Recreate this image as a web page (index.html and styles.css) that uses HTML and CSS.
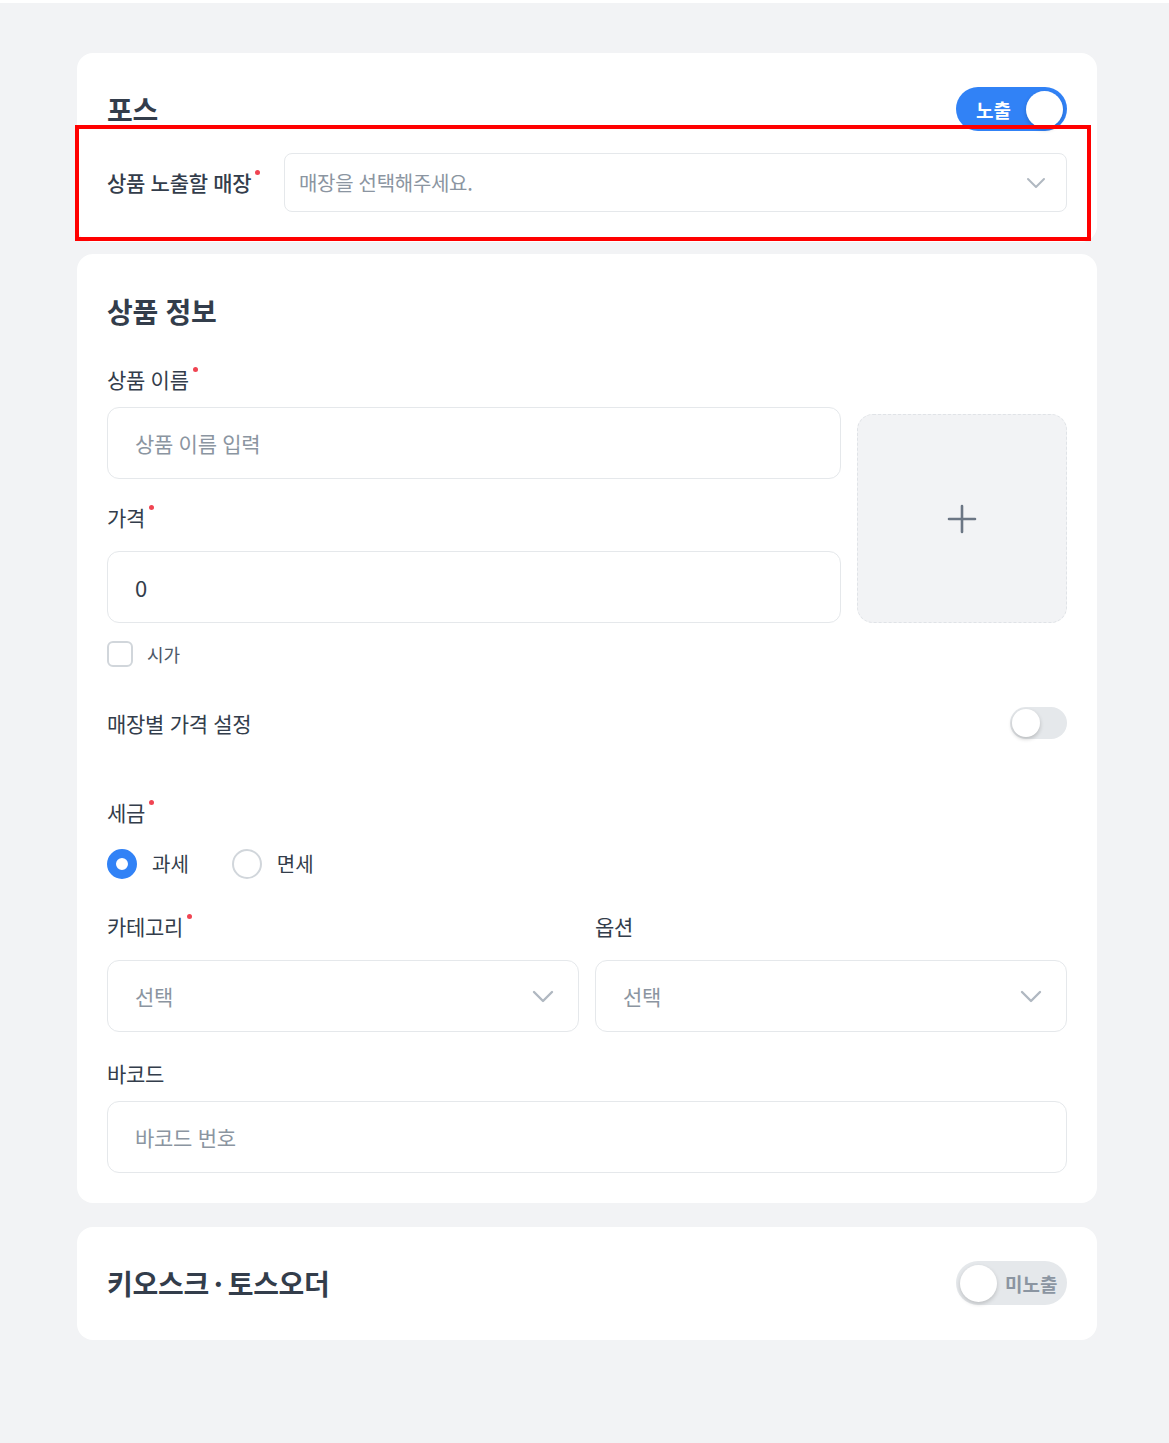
FILE: index.html
```html
<!DOCTYPE html>
<html lang="ko">
<head>
<meta charset="utf-8">
<link rel="stylesheet" href="styles.css">
</head>
<body>
<div class="page">
  <section class="card card-pos">
    <div class="card-head">
      <h2 class="title">포스</h2>
      <div class="pill-toggle on"><span class="pill-text">노출</span><span class="knob"></span></div>
    </div>
    <div class="store-row">
      <label class="label label-store req">상품 노출할 매장</label>
      <div class="select select-sm">
        <span class="placeholder">매장을 선택해주세요.</span>
        <svg class="chev" width="20" height="12" viewBox="0 0 20 12"><path d="M2 2l8 8 8-8" fill="none" stroke="#b0b8c1" stroke-width="2" stroke-linecap="round" stroke-linejoin="round"/></svg>
      </div>
    </div>
    <div class="highlight"></div>
  </section>

  <section class="card card-info">
    <h2 class="title">상품 정보</h2>
    <div class="top-grid">
      <div class="fields">
        <div class="field field-name">
          <label class="label req">상품 이름</label>
          <div class="input"><span class="placeholder">상품 이름 입력</span></div>
        </div>
        <div class="field field-price">
          <label class="label req">가격</label>
          <div class="input"><span class="value">0</span></div>
        </div>
      </div>
      <div class="image-box">
        <svg width="32" height="32" viewBox="0 0 32 32"><path d="M16 3v26M3 16h26" stroke="#6b7684" stroke-width="2.6" stroke-linecap="round"/></svg>
      </div>
    </div>
    <div class="check-row">
      <span class="checkbox"></span><span class="check-text">시가</span>
    </div>
    <div class="switch-row">
      <span class="label">매장별 가격 설정</span>
      <span class="switch"><span class="knob"></span></span>
    </div>
    <div class="field tax">
      <label class="label req">세금</label>
      <div class="radio-row">
        <span class="radio checked"></span><span class="radio-text">과세</span>
        <span class="radio"></span><span class="radio-text">면세</span>
      </div>
    </div>
    <div class="two-col">
      <div class="field">
        <label class="label req">카테고리</label>
        <div class="select">
          <span class="placeholder">선택</span>
          <svg class="chev" width="24" height="14" viewBox="0 0 24 14"><path d="M3 3l9 9 9-9" fill="none" stroke="#b0b8c1" stroke-width="2.4" stroke-linecap="round" stroke-linejoin="round"/></svg>
        </div>
      </div>
      <div class="field">
        <label class="label">옵션</label>
        <div class="select">
          <span class="placeholder">선택</span>
          <svg class="chev" width="24" height="14" viewBox="0 0 24 14"><path d="M3 3l9 9 9-9" fill="none" stroke="#b0b8c1" stroke-width="2.4" stroke-linecap="round" stroke-linejoin="round"/></svg>
        </div>
      </div>
    </div>
    <div class="field barcode">
      <label class="label">바코드</label>
      <div class="input"><span class="placeholder">바코드 번호</span></div>
    </div>
  </section>

  <section class="card card-kiosk">
    <h2 class="title">키오스크<span class="mid-dot">·</span>토스오더</h2>
    <div class="pill-toggle off"><span class="knob"></span><span class="pill-text">미노출</span></div>
  </section>
</div>
</body>
</html>
```

FILE: styles.css
```css
* { box-sizing: border-box; }
html { background: #ffffff; }
body {
  margin: 0;
  border-top: 3px solid #ffffff;
  background: #f2f3f5;
  min-height: 1443px;
  font-family: "Noto Sans CJK KR", "Noto Sans", sans-serif;
  color: #333d4b;
}
.page {
  width: 1020px;
  margin-left: 77px;
  padding-top: 50px;
  display: flex;
  flex-direction: column;
}
.card {
  background: #ffffff;
  border-radius: 16px;
  padding: 0 30px;
}
.card-pos {
  position: relative;
  height: 189px;
  padding-top: 34px;
  margin-bottom: 12px;
}
.card-head {
  display: flex;
  justify-content: space-between;
  align-items: center;
  height: 44px;
}
.title {
  margin: 0;
  font-size: 28px;
  font-weight: 700;
  color: #333d4b;
  line-height: 1;
  letter-spacing: -0.3px;
}
.mid-dot { margin: 0 5px; }
.pill-toggle {
  width: 111px;
  height: 44px;
  border-radius: 22px;
  display: flex;
  align-items: center;
  padding: 0 4px;
}
.pill-toggle.on { background: #3182f6; justify-content: flex-end; }
.pill-toggle.off { background: #e5e8eb; justify-content: flex-start; }
.pill-toggle .knob {
  width: 37px;
  height: 37px;
  border-radius: 50%;
  background: #ffffff;
  box-shadow: 0 2px 4px rgba(0,0,0,0.18);
  flex: none;
}
.pill-text {
  font-size: 19px;
  font-weight: 700;
  line-height: 1;
}
.on .pill-text { color: #ffffff; margin-right: 15px; }
.off .pill-text { color: #8b95a1; margin-left: 8px; }
.store-row {
  display: flex;
  align-items: center;
  margin-top: 22px;
}
.label {
  font-size: 21px;
  font-weight: 400;
  color: #333d4b;
  line-height: 1.2;
  letter-spacing: -0.3px;
}
.label-store { width: 177px; flex: none; font-weight: 500; }
.label.req::after {
  content: "";
  display: inline-block;
  width: 5px;
  height: 5px;
  border-radius: 50%;
  background: #f04452;
  margin-left: 4px;
  vertical-align: top;
  margin-top: 0;
}
.select, .input {
  display: flex;
  align-items: center;
  justify-content: space-between;
  border: 1.5px solid #e5e8eb;
  border-radius: 12px;
  height: 72px;
  padding: 0 23px 0 27px;
  background: #ffffff;
}
.select-sm {
  flex: 1;
  height: 59px;
  border-radius: 8px;
  padding: 0 20px 0 14px;
}
.placeholder {
  font-size: 21px;
  color: #8b95a1;
  letter-spacing: -0.3px;
}
.select-sm .placeholder { font-size: 20px; }
.value { font-size: 22px; color: #333d4b; }
.highlight {
  position: absolute;
  left: -2px;
  top: 72px;
  width: 1016px;
  height: 116px;
  border: 4px solid #ff0000;
}
.card-info {
  padding-top: 43px;
  padding-bottom: 30px;
  margin-bottom: 24px;
}
.card-info .title { margin-bottom: 42px; }
.top-grid {
  display: flex;
  gap: 16px;
  align-items: flex-end;
}
.fields { flex: 1; display: flex; flex-direction: column; }
.field { display: flex; flex-direction: column; }
.field-name { gap: 15px; }
.field-price { gap: 21px; margin-top: 26px; }
.image-box {
  width: 210px;
  height: 209px;
  background: #f2f3f5;
  border: 1px dashed #e0e3e7;
  border-radius: 16px;
  display: flex;
  align-items: center;
  justify-content: center;
  flex: none;
}
.check-row {
  display: flex;
  align-items: center;
  margin-top: 18px;
}
.checkbox {
  width: 26px;
  height: 26px;
  border: 2px solid #d1d6db;
  border-radius: 6px;
}
.check-text { font-size: 18px; color: #4e5968; margin-left: 14px; }
.switch-row {
  display: flex;
  align-items: center;
  justify-content: space-between;
  margin-top: 40px;
}
.switch {
  width: 57px;
  height: 32px;
  border-radius: 16px;
  background: #e5e8eb;
  padding: 2px;
  display: flex;
}
.switch .knob {
  width: 28px;
  height: 28px;
  border-radius: 50%;
  background: #ffffff;
  box-shadow: 0 2px 4px rgba(0,0,0,0.2);
}
.tax { margin-top: 61px; gap: 23px; }
.radio-row { display: flex; align-items: center; }
.radio {
  width: 30px;
  height: 30px;
  border-radius: 50%;
  border: 2.5px solid #d1d6db;
  flex: none;
}
.radio.checked {
  border: 9px solid #3182f6;
  background: #ffffff;
}
.radio-text {
  font-size: 20px;
  color: #333d4b;
  margin-left: 15px;
  margin-right: 43px;
}
.two-col {
  display: grid;
  grid-template-columns: 1fr 1fr;
  gap: 16px;
  margin-top: 35px;
}
.two-col .field { gap: 21px; }
.barcode { margin-top: 29px; gap: 15px; }
.card-kiosk {
  height: 113px;
  display: flex;
  align-items: center;
  justify-content: space-between;
}
```
